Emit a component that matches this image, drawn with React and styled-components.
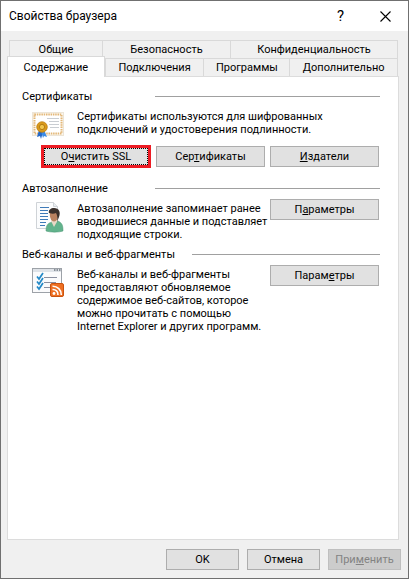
import React, { useState } from 'react';
import styled, { createGlobalStyle } from 'styled-components';

const GlobalStyle = createGlobalStyle`
  * {
    box-sizing: border-box;
  }

  body {
    margin: 0;
    background: #f0f0f0;
    color: #000;
    font-family: Roboto, 'Noto Sans', sans-serif;
    font-size: 11px;
    line-height: 13px;
  }

  button {
    font: inherit;
    color: inherit;
    padding: 0;
  }
`;

const Window = styled.div`
  display: flex;
  flex-direction: column;
  min-height: 100vh;
  border: 1px solid #707070;
`;

const TitleBar = styled.header`
  display: flex;
  align-items: center;
  height: 30px;
  padding-left: 8px;
  background: #fff;
`;

const Title = styled.h1`
  flex: 1;
  margin: 0;
  font-size: 12px;
  font-weight: 400;
  line-height: 16px;
`;

const TitleButton = styled.button`
  display: flex;
  align-items: center;
  justify-content: center;
  width: 45px;
  height: 30px;
  border: none;
  background: none;
  font-size: 15px;
`;

const Body = styled.main`
  display: flex;
  flex: 1;
  flex-direction: column;
  padding: 9px 7px 8px 6px;
`;

const TabRow = styled.div`
  display: grid;
  grid-template-columns: ${(props) => props.$columns};
  margin: 0 3px 0 2px;
  padding-right: 1px;
`;

const Tab = styled.button`
  height: ${(props) => (props.$active ? 21 : 18)}px;
  margin: ${(props) => (props.$active ? '-2px 0 -1px -2px' : '0 -1px 0 0')};
  border: 1px solid #d9d9d9;
  border-bottom: none;
  background: ${(props) => (props.$active ? '#fff' : '#f0f0f0')};
  z-index: ${(props) => (props.$active ? 1 : 0)};
`;

const Panel = styled.div`
  flex: 1;
  margin-right: 2px;
  padding: 13px 18px 12px 14px;
  border: 1px solid #dcdcdc;
  background: #fff;
`;

const Section = styled.section`
  margin-bottom: ${(props) => props.$gap}px;
`;

const Legend = styled.h2`
  display: grid;
  grid-template-columns: ${(props) => props.$label}px 1fr;
  align-items: center;
  margin: 0;
  font-size: 11px;
  font-weight: 400;

  &::after {
    content: '';
    height: 1px;
    background: #a0a0a0;
  }
`;

const Row = styled.div`
  display: flex;
  align-items: flex-start;
  padding: 3px 1px 0 10px;
`;

const IconBox = styled.div`
  display: flex;
  flex: none;
  align-items: center;
  width: 45px;
  height: 38px;
`;

const Text = styled.p`
  flex: 1;
  min-width: 0;
  margin: 4px 0 0;
  white-space: pre;
`;

const Button = styled.button`
  flex: none;
  width: ${(props) => props.$width}px;
  height: 21px;
  border: 1px solid #adadad;
  background: #e1e1e1;

  &:disabled {
    border-color: #bfbfbf;
    background: #ccc;
    color: #838383;
  }

  ${Row} > & {
    margin-top: 1px;
  }
`;

const FocusButton = styled(Button)`
  height: 23px;
  border: 3px solid #ed1c24;
  outline: 1px dotted #000;
  outline-offset: -4px;
`;

const ButtonRow = styled.div`
  display: flex;
  align-items: center;
  gap: 5px;
  padding: 1px 1px 0 19px;
`;

const Footer = styled.footer`
  display: flex;
  justify-content: flex-end;
  gap: 8px;
  padding-top: 9px;
`;

const CloseIcon = () => (
  <svg width="11" height="11" viewBox="0 0 11 11" stroke="#000" strokeWidth="1.1">
    <path d="M.5.5l10 10M10.5.5l-10 10" />
  </svg>
);

const CertificateIcon = () => (
  <svg width="32" height="27" viewBox="0 0 32 27">
    <rect x="0.5" y="0.5" width="31" height="23" fill="#fbf6ec" stroke="#ece5d8" />
    <rect x="2.5" y="2.5" width="27" height="19" fill="#fff" stroke="#e3b778" strokeWidth="2" strokeDasharray="1.5 .8" />
    <path d="M15 6.5h12M17 9.5h10M17 12.5h10M18 15.5h9" stroke="#c9cdd2" />
    <path d="M7 18l-2 7 3-1 1 3 2-7z" fill="#2469c9" />
    <path d="M12 18l3 7-3-1-1 2-2-7z" fill="#3b8be6" />
    <circle cx="10" cy="15" r="5.3" fill="#d99a1c" stroke="#b97908" strokeWidth=".7" />
    <circle cx="10" cy="15" r="2.6" fill="#f1c64e" stroke="#a86f0b" strokeWidth=".8" />
  </svg>
);

const UserFormIcon = () => (
  <svg width="32" height="31" viewBox="0 2 32 31">
    <path d="M4.5 2.5h17l4 4v22h-21z" fill="#fbfcfd" stroke="#cfd3d7" />
    <path d="M21.5 2.5v4h4" fill="#e9edf0" stroke="#cfd3d7" />
    <path d="M8 7.5h9M8 10.5h8M8 13.5h8M8 16.5h8M8 19.5h8M8 22.5h6M8 25.5h5" stroke="#3e7ab8" />
    <path d="M14 31c0-6 2-8 6-9l6-1c4 2 5 4 5 10-4 1.500-13 1.500-17 0z" fill="#62b38c" stroke="#489473" strokeWidth=".5" />
    <path d="M19 21l3 6 4-7-1-3h-5z" fill="#e8d8c6" />
    <ellipse cx="22" cy="15" rx="4.2" ry="6.5" fill="#b98260" />
    <path d="M17 13c-1-3 2-5 5-5 5 0 7 4 5 9l-2 5c1-5 0-7-1-9-2 1-4 1-7 0z" fill="#3a302b" />
  </svg>
);

const FeedIcon = () => (
  <svg width="32" height="30" viewBox="0 0 32 30">
    <rect x=".5" y=".5" width="29" height="24" fill="#fbfbfc" stroke="#9da2a8" />
    <path d="M1 2.5h28" stroke="#dfe3e8" strokeWidth="3" />
    <path d="M22 2h1.5M24.5 2h1.5M27 2h1.5" stroke="#6e757d" strokeWidth="1.5" />
    <path d="M12 9.5h13M12 14.5h12M12 19.5h6" stroke="#8a8fa0" />
    <path d="M5 8.5l2 2.5 4-6M5 13.5l2 2.5 4-6M5 18.5l2 2.5 4-6" fill="none" stroke="#2389c7" strokeWidth="1.7" />
    <rect x="18.5" y="15.5" width="13" height="13" rx="1.5" fill="#ee7023" stroke="#c9530f" />
    <circle cx="22" cy="25.5" r="1.4" fill="#fff" />
    <path d="M20.5 21.5a5 5 0 0 1 5.5 5.5M20.5 18.2a8.5 8.5 0 0 1 8.8 8.8" fill="none" stroke="#fff" strokeWidth="1.6" />
  </svg>
);

const topTabs = ['Общие', 'Безопасность', 'Конфиденциальность'];
const bottomTabs = ['Содержание', 'Подключения', 'Программы', 'Дополнительно'];

const App = () => {
  const [active, setActive] = useState('Содержание');

  const renderTab = (name) => (
    <Tab key={name} role="tab" aria-selected={active === name} $active={active === name} onClick={() => setActive(name)}>
      {name}
    </Tab>
  );

  return (
    <>
      <GlobalStyle />
      <Window>
        <TitleBar>
          <Title>Свойства браузера</Title>
          <TitleButton aria-label="Справка">?</TitleButton>
          <TitleButton aria-label="Закрыть">
            <CloseIcon />
          </TitleButton>
        </TitleBar>
        <Body>
          <TabRow role="tablist" $columns="93fr 128fr 167fr">
            {topTabs.map(renderTab)}
          </TabRow>
          <TabRow role="tablist" $columns="96fr 99fr 86fr 108fr">
            {bottomTabs.map(renderTab)}
          </TabRow>
          <Panel>
            <Section $gap={14}>
              <Legend $label={133}>Сертификаты</Legend>
              <Row>
                <IconBox>
                  <CertificateIcon />
                </IconBox>
                <Text>{'Сертификаты используются для шифрованных\nподключений и удостоверения подлинности.'}</Text>
              </Row>
              <ButtonRow>
                <FocusButton $width={110}>
                  О<u>ч</u>истить SSL
                </FocusButton>
                <Button $width={109}>
                  Сер<u>т</u>ификаты
                </Button>
                <Button $width={109}>
                  <u>И</u>здатели
                </Button>
              </ButtonRow>
            </Section>
            <Section $gap={7}>
              <Legend $label={133}>Автозаполнение</Legend>
              <Row>
                <IconBox>
                  <UserFormIcon />
                </IconBox>
                <Text>{'Автозаполнение запоминает ранее\nвводившиеся данные и подставляет\nподходящие строки.'}</Text>
                <Button $width={109}>
                  П<u>а</u>раметры
                </Button>
              </Row>
            </Section>
            <Section $gap={0}>
              <Legend $label={170}>Веб-каналы и веб-фрагменты</Legend>
              <Row>
                <IconBox>
                  <FeedIcon />
                </IconBox>
                <Text>
                  {'Веб-каналы и веб-фрагменты\nпредоставляют обновляемое\nсодержимое веб-сайтов, которое\nможно прочитать с помощью\nInternet Explorer и других программ.'}
                </Text>
                <Button $width={109}>
                  Парам<u>е</u>тры
                </Button>
              </Row>
            </Section>
          </Panel>
          <Footer>
            <Button $width={73}>OK</Button>
            <Button $width={73}>Отмена</Button>
            <Button $width={73} disabled>
              При<u>м</u>енить
            </Button>
          </Footer>
        </Body>
      </Window>
    </>
  );
};

export default App;
